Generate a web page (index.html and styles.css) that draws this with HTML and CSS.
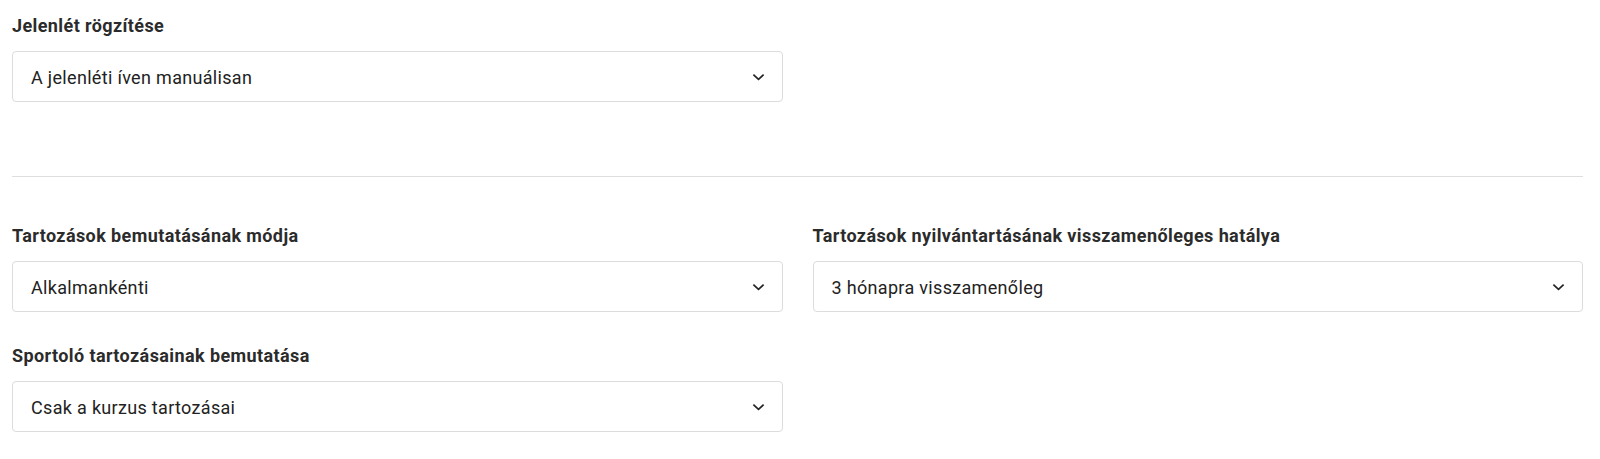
FILE: index.html
```html
<!DOCTYPE html>
<html>
<head>
    <title>Beállítások</title>
    <link rel="stylesheet" href="styles.css">
</head>
<body>
    <div class="settings">
        <div class="row">
            <div class="field">
                <label class="field-label">Jelenlét rögzítése</label>
                <div class="select">
                    <span>A jelenléti íven manuálisan</span>
                    <svg class="chevron" viewBox="0 0 14 8"><path d="M1.5 1.5L7 6.5L12.5 1.5"/></svg>
                </div>
            </div>
            <div></div>
        </div>

        <hr class="divider">

        <div class="row">
            <div class="field">
                <label class="field-label">Tartozások bemutatásának módja</label>
                <div class="select">
                    <span>Alkalmankénti</span>
                    <svg class="chevron" viewBox="0 0 14 8"><path d="M1.5 1.5L7 6.5L12.5 1.5"/></svg>
                </div>
            </div>
            <div class="field">
                <label class="field-label">Tartozások nyilvántartásának visszamenőleges hatálya</label>
                <div class="select">
                    <span>3 hónapra visszamenőleg</span>
                    <svg class="chevron" viewBox="0 0 14 8"><path d="M1.5 1.5L7 6.5L12.5 1.5"/></svg>
                </div>
            </div>
            <div class="field">
                <label class="field-label">Sportoló tartozásainak bemutatása</label>
                <div class="select">
                    <span>Csak a kurzus tartozásai</span>
                    <svg class="chevron" viewBox="0 0 14 8"><path d="M1.5 1.5L7 6.5L12.5 1.5"/></svg>
                </div>
            </div>
        </div>
    </div>
</body>
</html>
```

FILE: styles.css
```css
body {
    margin: 0;
    font-family: Roboto, "Liberation Sans", sans-serif;
    background: #fff;
    color: #212121;
}
.settings {
    padding: 14px 17px 0 12px;
}
.row {
    display: grid;
    grid-template-columns: 1fr 1fr;
    column-gap: 30px;
    row-gap: 32px;
}
.field {
    display: flex;
    flex-direction: column;
}
.field-label {
    font-size: 18px;
    font-weight: 700;
    line-height: 24px;
    letter-spacing: 0.4px;
    color: #2b2b2b;
    margin-bottom: 13px;
}
.select {
    height: 51px;
    box-sizing: border-box;
    border: 1px solid #dcdcdc;
    border-radius: 4px;
    display: flex;
    align-items: center;
    justify-content: space-between;
    padding: 1px 17px 0 18px;
    font-size: 18px;
    letter-spacing: 0.32px;
    color: #222;
    cursor: pointer;
}
.chevron {
    width: 13px;
    height: 8px;
    fill: none;
    stroke: #222;
    stroke-width: 1.8;
}
.divider {
    border: none;
    border-top: 1px solid #dedede;
    margin: 74px 0 47px;
}
```
